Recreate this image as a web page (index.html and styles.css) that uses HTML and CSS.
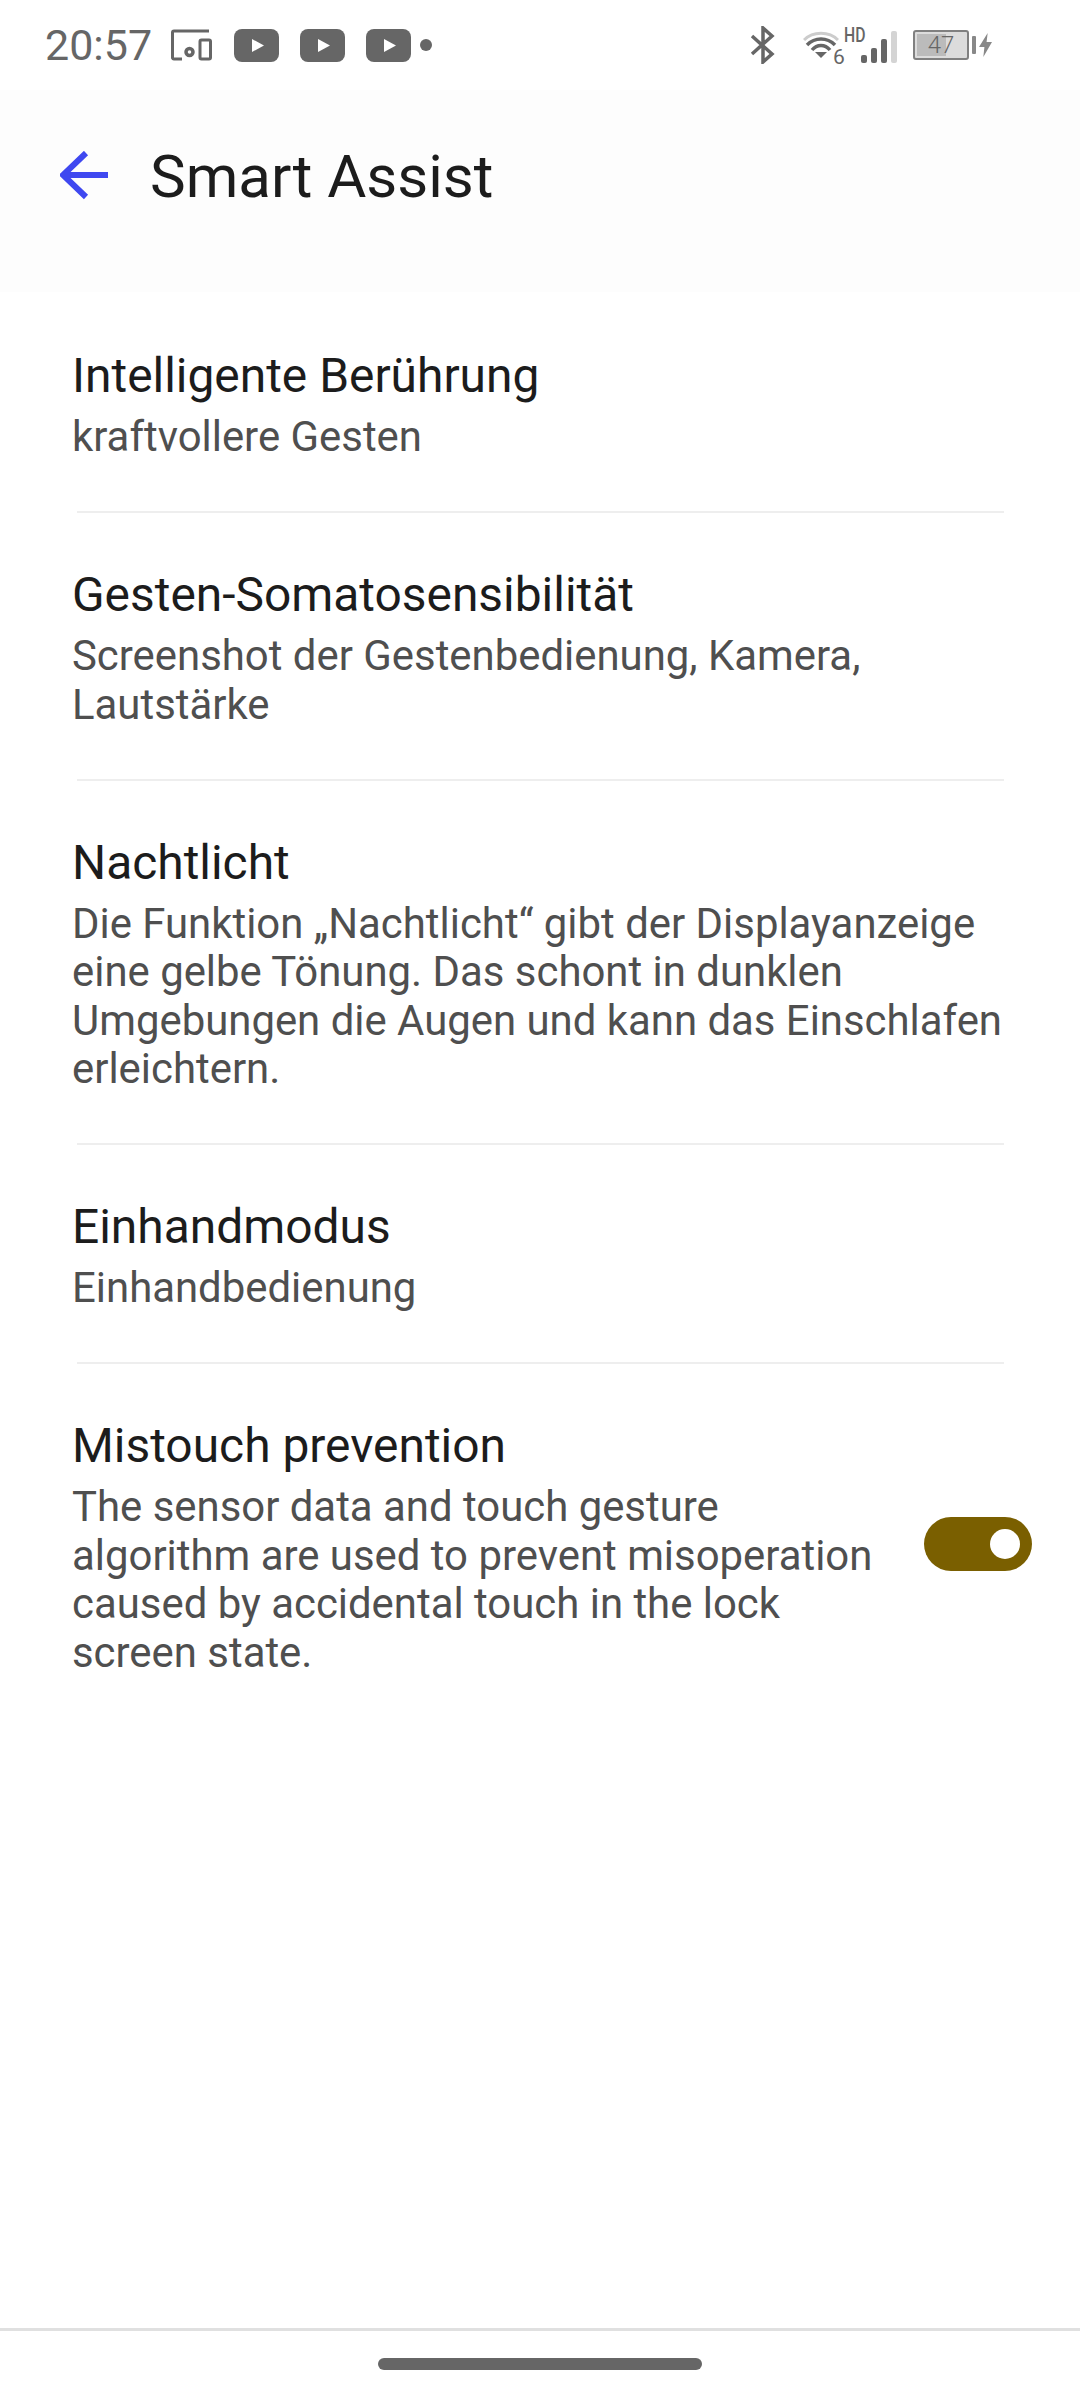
FILE: index.html
```html
<!DOCTYPE html>
<html lang="de">

<head>
    <meta charset="UTF-8">
    <meta name="viewport" content="width=device-width, initial-scale=1.0">
    <title>Smart Assist</title>
    <link rel="stylesheet" href="styles.css">
</head>

<body>

    <div class="phone">
        <div class="status-bar">
            <div class="status-left">
                <span class="clock">20:57</span>
                <svg class="ic-devices" width="41" height="32" viewBox="0 0 41 32" fill="none" stroke="#666" stroke-width="3">
                    <path d="M38 2H3a1.500 1.500 0 0 0-1.500 1.500V29a1.500 1.500 0 0 0 1.500 1H11"/>
                    <rect x="29" y="11" width="10.500" height="19" rx="1.500"/>
                    <circle cx="18.500" cy="23" r="3.500" stroke-width="3.500"/>
                </svg>
                <svg class="ic-yt" width="45" height="33" viewBox="0 0 45 33"><rect width="45" height="33" rx="8" fill="#666"/><path d="M18 10v13l12-6.500z" fill="#fff"/></svg>
                <svg class="ic-yt" width="45" height="33" viewBox="0 0 45 33"><rect width="45" height="33" rx="8" fill="#666"/><path d="M18 10v13l12-6.500z" fill="#fff"/></svg>
                <svg class="ic-yt" width="45" height="33" viewBox="0 0 45 33"><rect width="45" height="33" rx="8" fill="#666"/><path d="M18 10v13l12-6.500z" fill="#fff"/></svg>
                <span class="dot"></span>
            </div>
            <div class="status-right">
                <svg class="ic-bt" width="26" height="38" viewBox="0 0 26 38" fill="none" stroke="#666" stroke-width="3.500">
                    <path d="M2 10l20 18-9 8V2l9 8L2 28"/>
                </svg>
                <svg class="ic-wifi" width="36" height="28" viewBox="0 0 36 28" fill="none">
                    <path d="M1 9C10 0 26 0 35 9" stroke="#ccc" stroke-width="3"/>
                    <path d="M4 14C12 6 24 6 32 14" stroke="#666" stroke-width="3.500"/>
                    <path d="M9 19C14 13 22 13 27 19" stroke="#666" stroke-width="3.500"/>
                    <path d="M12 21h12l-6 6z" fill="#666"/>
                </svg>
                <div class="net">
                    <span class="wifi-six">6</span>
                    <span class="hd">HD</span>
                </div>
                <div class="signal">
                    <span class="bar bar-1"></span>
                    <span class="bar bar-2"></span>
                    <span class="bar bar-3"></span>
                    <span class="bar bar-4"></span>
                </div>
                <div class="battery">
                    <div class="battery-body">
                        <div class="battery-fill"></div>
                        <span class="battery-num">47</span>
                    </div>
                    <span class="battery-cap"></span>
                </div>
                <svg class="ic-bolt" width="13" height="24" viewBox="0 0 12 24" preserveAspectRatio="none"><path d="M8 0L0 14h5l-1 10 8-15H7z" fill="#888"/></svg>
            </div>
        </div>

        <header class="app-bar">
            <svg class="back" width="50" height="50" viewBox="0 0 50 50" fill="none" stroke="#3f48f0" stroke-width="6">
                <path d="M48 24H3M26 2L3 24l23 22"/>
            </svg>
            <h1>Smart Assist</h1>
        </header>

        <main class="list">
            <div class="row">
                <div class="row-title">Intelligente Berührung</div>
                <div class="row-sub">kraftvollere Gesten</div>
            </div>
            <div class="row">
                <div class="row-title">Gesten-Somatosensibilität</div>
                <div class="row-sub">Screenshot der Gestenbedienung, Kamera,<br>Lautstärke</div>
            </div>
            <div class="row">
                <div class="row-title">Nachtlicht</div>
                <div class="row-sub">Die Funktion „Nachtlicht“ gibt der Displayanzeige<br>eine gelbe Tönung. Das schont in dunklen<br>Umgebungen die Augen und kann das Einschlafen<br>erleichtern.</div>
            </div>
            <div class="row">
                <div class="row-title">Einhandmodus</div>
                <div class="row-sub">Einhandbedienung</div>
            </div>
            <div class="row row-toggle">
                <div class="row-text">
                    <div class="row-title">Mistouch prevention</div>
                    <div class="row-sub">The sensor data and touch gesture<br>algorithm are used to prevent misoperation<br>caused by accidental touch in the lock<br>screen state.</div>
                </div>
                <div class="toggle"><span class="knob"></span></div>
            </div>
        </main>

        <footer class="nav-bar">
            <span class="home-pill"></span>
        </footer>
    </div>

</body>

</html>
```

FILE: styles.css
```css
* {
    box-sizing: border-box;
}

body {
    margin: 0;
    background-color: #fff;
    font-family: Roboto, "Noto Sans", sans-serif;
}

.phone {
    width: 1080px;
    height: 2400px;
    display: flex;
    flex-direction: column;
}

.status-bar {
    height: 90px;
    display: flex;
    justify-content: space-between;
    align-items: center;
    padding: 0 88px 0 45px;
}

.status-left,
.status-right {
    display: flex;
    align-items: center;
}

.clock {
    font-size: 43px;
    color: #666;
    margin-right: 19px;
}

.ic-devices {
    margin-right: 22px;
}

.ic-yt {
    margin-right: 21px;
}

.dot {
    width: 12px;
    height: 12px;
    border-radius: 50%;
    background-color: #666;
    margin-left: -12px;
}

.ic-bt {
    margin-right: 27px;
}

.net {
    width: 28px;
    height: 40px;
    margin-left: -6px;
    position: relative;
    color: #666;
}

.wifi-six {
    position: absolute;
    left: 0;
    bottom: -4px;
    font-size: 21px;
    line-height: 24px;
}

.hd {
    position: absolute;
    left: 11px;
    top: -2px;
    font-size: 21px;
    line-height: 24px;
    font-weight: 500;
    transform: scaleX(.75);
    transform-origin: left;
}

.signal {
    display: flex;
    align-items: flex-end;
    gap: 4px;
    height: 32px;
    margin: 4px 16px 0 0;
}

.bar {
    width: 6px;
    background-color: #666;
    border-radius: 2px;
}

.bar-1 {
    height: 8px;
}

.bar-2 {
    height: 15px;
}

.bar-3 {
    height: 24px;
}

.bar-4 {
    height: 32px;
    background-color: #d4d4d4;
}

.battery {
    display: flex;
    align-items: center;
    gap: 3px;
}

.battery-body {
    width: 56px;
    height: 30px;
    border: 2px solid #808080;
    border-radius: 3px;
    padding: 2px;
    position: relative;
    background-color: #dcdcdc;
}

.battery-fill {
    width: 60%;
    height: 100%;
    background-color: #bbb;
}

.battery-num {
    position: absolute;
    left: 0;
    right: 0;
    top: 0;
    text-align: center;
    font-size: 24px;
    line-height: 27px;
    font-weight: 300;
    color: #666;
}

.battery-cap {
    width: 4px;
    height: 18px;
    background-color: #888;
    border-radius: 1px;
}

.ic-bolt {
    margin-left: 3px;
}

.app-bar {
    height: 202px;
    background-color: #fdfdfd;
    display: flex;
    align-items: center;
    padding: 0 0 30px 60px;
}

.back {
    margin-right: 40px;
}

h1 {
    margin: 0;
    font-size: 60px;
    font-weight: 400;
    color: #1c1c1c;
}

.list {
    flex: 1;
}

.row {
    padding: 56px 72px 49.500px 72px;
    position: relative;
}

.row + .row::before {
    content: "";
    position: absolute;
    top: 0;
    left: 77px;
    right: 76px;
    height: 2px;
    background-color: #eee;
}

.row-title {
    font-size: 47.900px;
    line-height: 56px;
    margin-bottom: 9px;
    color: #1c1c1c;
}

.row-sub {
    font-size: 41.900px;
    line-height: 48.500px;
    color: #4f4f4f;
}

.row-toggle {
    display: flex;
    justify-content: space-between;
    align-items: center;
    padding-right: 48px;
}

.toggle {
    width: 108px;
    height: 54px;
    margin-bottom: 7px;
    border-radius: 27px;
    background-color: #7a5f00;
    display: flex;
    align-items: center;
    justify-content: flex-end;
    padding-right: 12px;
}

.knob {
    width: 30px;
    height: 30px;
    border-radius: 50%;
    background-color: #fff;
}

.nav-bar {
    height: 72px;
    border-top: 3px solid #e0e0e0;
    display: flex;
    justify-content: center;
    padding-top: 27px;
}

.home-pill {
    width: 324px;
    height: 12px;
    border-radius: 6px;
    background-color: #666;
}
```
